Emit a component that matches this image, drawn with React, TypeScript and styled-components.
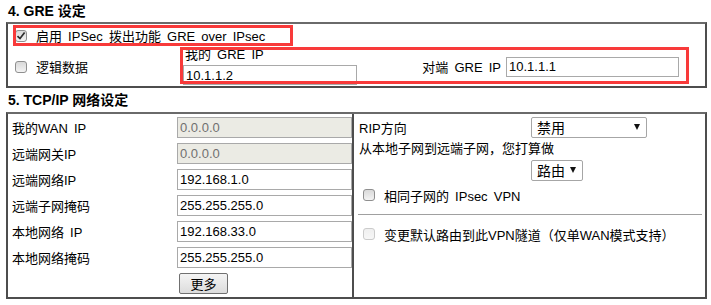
import React from "react";
import styled, { createGlobalStyle } from "styled-components";

const Global = createGlobalStyle`
  html, body { margin: 0; padding: 0; background: #fff; }
  body {
    font-family: "Liberation Sans", "Noto Sans CJK SC", sans-serif;
    font-size: 13px;
    color: #000;
    word-spacing: 2.5px;
  }
  * { box-sizing: border-box; }
`;

const Page = styled.div`
  position: relative;
  width: 711px;
  height: 305px;
`;

const SectionTitle = styled.div<{ $h: number }>`
  height: ${(p) => p.$h}px;
  line-height: ${(p) => p.$h}px;
  padding-left: 8px;
  font-weight: bold;
  font-size: 14px;
  white-space: nowrap;
  word-spacing: 0;
`;

const Panel = styled.div<{ $h: number }>`
  margin-left: 6px;
  width: 701px;
  height: ${(p) => p.$h}px;
  border: 2px solid #4d4d4d;
  border-top-color: #6a6a6a;
  display: flex;
`;

const GreBody = styled.div`
  display: flex;
  flex-direction: column;
  flex: 1;
`;

const GreRow1 = styled.div`
  height: 23px;
  display: flex;
  align-items: center;
  padding-left: 7px;
`;

const GreRow2 = styled.div`
  height: 39px;
  display: flex;
`;

const CheckCell = styled.div`
  width: 175px;
  display: flex;
  align-items: center;
  padding-left: 7px;
`;

const StackCell = styled.div`
  width: 174px;
  display: flex;
  flex-direction: column;
`;

const StackLabel = styled.div`
  height: 16px;
  line-height: 16px;
  padding-left: 2px;
  white-space: nowrap;
`;

const PeerCell = styled.div`
  flex: 1;
  display: flex;
  align-items: center;
  justify-content: flex-end;
  gap: 5px;
  padding-right: 26px;
  white-space: nowrap;
`;

const Input = styled.div<{ $w: number; $h?: number; $disabled?: boolean }>`
  width: ${(p) => p.$w}px;
  height: ${(p) => p.$h ?? 21}px;
  border: 1px solid #a9a9a9;
  background: ${(p) => (p.$disabled ? "#ebebe4" : "#fff")};
  color: ${(p) => (p.$disabled ? "#707070" : "#000")};
  font-family: "Liberation Sans", sans-serif;
  font-size: 13px;
  word-spacing: 0;
  display: flex;
  align-items: center;
  padding-left: 2px;
  flex: none;
`;

const CheckLabel = styled.label<{ $indent?: number }>`
  display: flex;
  align-items: center;
  gap: 9px;
  margin-left: ${(p) => p.$indent ?? 0}px;
  white-space: nowrap;
`;

const Box = styled.span<{ $disabled?: boolean }>`
  width: 12px;
  height: 12px;
  flex: none;
  border: 1px solid ${(p) => (p.$disabled ? "#cbcbcb" : "#8f8f8f")};
  border-radius: 3px;
  background: ${(p) =>
    p.$disabled
      ? "linear-gradient(#efefef, #f7f7f7)"
      : "linear-gradient(#d9d9d9, #f3f3f3)"};
  display: flex;
  align-items: center;
  justify-content: center;
`;

const Checkbox = ({ checked, disabled }: { checked?: boolean; disabled?: boolean }) => (
  <Box $disabled={disabled}>
    {checked && (
      <svg width="10" height="10" viewBox="0 0 10 10">
        <path d="M1.5 5.2 L4 7.6 L8.6 1.6" fill="none" stroke="#2e2e2e" strokeWidth="1.7" />
      </svg>
    )}
  </Box>
);

const LeftPane = styled.div`
  width: 346px;
  border-right: 2px solid #4d4d4d;
  display: flex;
  flex-direction: column;
`;

const FormRow = styled.div`
  height: 26px;
  display: flex;
  align-items: center;
  padding-left: 4px;
`;

const RowLabel = styled.div`
  width: 165px;
  white-space: nowrap;
`;

const Button = styled.button`
  margin-left: 167px;
  width: 49px;
  height: 21px;
  border: 1px solid #707070;
  border-radius: 2px;
  background: linear-gradient(#f4f4f4, #dcdcdc);
  font-family: "Noto Sans CJK SC", sans-serif;
  font-size: 13px;
  padding: 0;
  color: #000;
`;

const RightPane = styled.div`
  flex: 1;
  display: flex;
  flex-direction: column;
  padding-left: 5px;
`;

const RightRow = styled.div<{ $h: number }>`
  height: ${(p) => p.$h}px;
  display: flex;
  align-items: center;
  white-space: nowrap;
`;

const RipLabel = styled.div`
  width: 172px;
`;

const Select = styled.div<{ $w: number; $ml?: number }>`
  width: ${(p) => p.$w}px;
  height: 21px;
  margin-left: ${(p) => p.$ml ?? 0}px;
  border: 1px solid #a6a6a6;
  border-radius: 2px;
  background: #fff;
  display: flex;
  align-items: center;
  justify-content: space-between;
  padding: 0 6px 0 5px;
  font-family: "Noto Sans CJK SC", sans-serif;
  font-size: 14px;
`;

const Caret = styled.span`
  width: 0;
  height: 0;
  border-left: 3px solid transparent;
  border-right: 3px solid transparent;
  border-top: 6px solid #111;
`;

const Divider = styled.div`
  height: 1px;
  background: #a0a0a0;
  margin: 9px 3px 9px -1px;
`;

const RedMark = styled.div<{ $x: number; $y: number; $w: number; $h: number }>`
  position: absolute;
  left: ${(p) => p.$x}px;
  top: ${(p) => p.$y}px;
  width: ${(p) => p.$w}px;
  height: ${(p) => p.$h}px;
  border: 3px solid #f83a3a;
  pointer-events: none;
`;

const leftRows: { label: string; value: string; disabled?: boolean }[] = [
  { label: "我的WAN IP", value: "0.0.0.0", disabled: true },
  { label: "远端网关IP", value: "0.0.0.0", disabled: true },
  { label: "远端网络IP", value: "192.168.1.0" },
  { label: "远端子网掩码", value: "255.255.255.0" },
  { label: "本地网络 IP", value: "192.168.33.0" },
  { label: "本地网络掩码", value: "255.255.255.0" },
];

export default function App() {
  return (
    <Page>
      <Global />
      <SectionTitle $h={22}>4. GRE 设定</SectionTitle>
      <Panel $h={66}>
        <GreBody>
          <GreRow1>
            <CheckLabel>
              <Checkbox checked />
              <span>启用 IPSec 拨出功能 GRE over IPsec</span>
            </CheckLabel>
          </GreRow1>
          <GreRow2>
            <CheckCell>
              <CheckLabel>
                <Checkbox />
                <span>逻辑数据</span>
              </CheckLabel>
            </CheckCell>
            <StackCell>
              <StackLabel>我的 GRE IP</StackLabel>
              <Input $w={174} $h={20} style={{ marginTop: 2 }}>10.1.1.2</Input>
            </StackCell>
            <PeerCell>
              <span>对端 GRE IP</span>
              <Input $w={173} $h={20}>10.1.1.1</Input>
            </PeerCell>
          </GreRow2>
        </GreBody>
      </Panel>
      <SectionTitle $h={24}>5. TCP/IP 网络设定</SectionTitle>
      <Panel $h={187}>
        <LeftPane>
          {leftRows.map((r) => (
            <FormRow key={r.label}>
              <RowLabel>{r.label}</RowLabel>
              <Input $w={175} $disabled={r.disabled}>{r.value}</Input>
            </FormRow>
          ))}
          <FormRow>
            <Button>更多</Button>
          </FormRow>
        </LeftPane>
        <RightPane>
          <RightRow $h={26}>
            <RipLabel>RIP方向</RipLabel>
            <Select $w={116}>
              <span>禁用</span>
              <Caret />
            </Select>
          </RightRow>
          <RightRow $h={15}>从本地子网到远端子网，您打算做</RightRow>
          <RightRow $h={30}>
            <Select $w={52} $ml={172}>
              <span>路由</span>
              <Caret />
            </Select>
          </RightRow>
          <RightRow $h={20}>
            <CheckLabel $indent={4}>
              <Checkbox />
              <span>相同子网的 IPsec VPN</span>
            </CheckLabel>
          </RightRow>
          <Divider />
          <RightRow $h={20}>
            <CheckLabel $indent={4}>
              <Checkbox disabled />
              <span>变更默认路由到此VPN隧道（仅单WAN模式支持）</span>
            </CheckLabel>
          </RightRow>
        </RightPane>
      </Panel>
      <RedMark $x={13} $y={25} $w={280} $h={21} />
      <RedMark $x={180} $y={47} $w={509} $h={37} />
    </Page>
  );
}
